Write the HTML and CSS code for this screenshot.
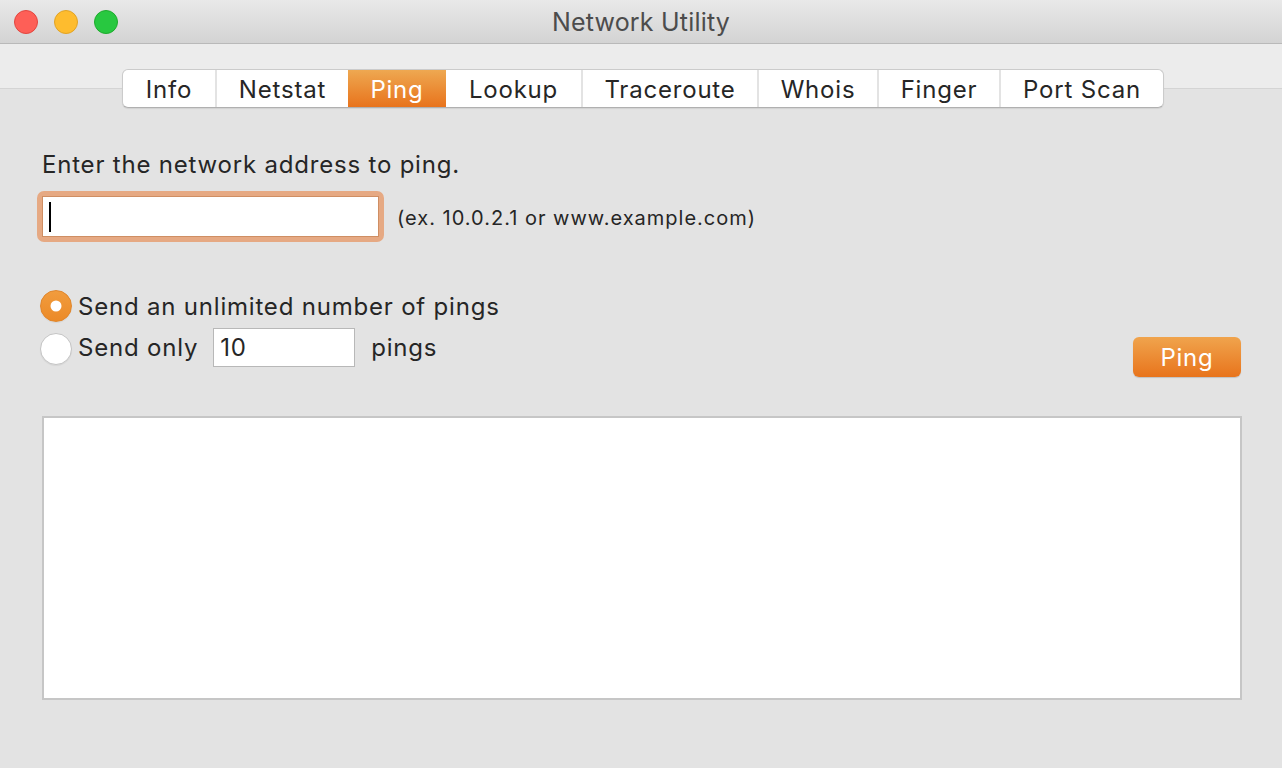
FILE: index.html
```html
<!DOCTYPE html>
<html>
<head>
<meta charset="utf-8">
<title>Network Utility</title>
<link rel="stylesheet" href="styles.css">
</head>
<body>
<div class="window">
  <div class="titlebar">
    <div class="lights">
      <span class="light red"></span>
      <span class="light yellow"></span>
      <span class="light green"></span>
    </div>
    <div class="title">Network Utility</div>
  </div>
  <div class="toolbar">
    <div class="segmented">
      <div class="seg s-info">Info</div>
      <div class="seg s-netstat">Netstat</div>
      <div class="seg s-ping selected">Ping</div>
      <div class="seg s-lookup">Lookup</div>
      <div class="seg s-trace">Traceroute</div>
      <div class="seg s-whois">Whois</div>
      <div class="seg s-finger">Finger</div>
      <div class="seg s-port">Port Scan</div>
    </div>
  </div>
  <div class="content">
    <div class="prompt">Enter the network address to ping.</div>
    <div class="addr-row">
      <div class="ring"><div class="addr-field"><span class="caret"></span></div></div>
      <div class="hint">(ex. 10.0.2.1 or www.example.com)</div>
    </div>
    <div class="options">
      <div class="radios">
        <div class="radio-row row1">
          <span class="radio checked"></span>
          <span class="label">Send an unlimited number of pings</span>
        </div>
        <div class="radio-row row2">
          <span class="radio"></span>
          <span class="label">Send only</span>
          <div class="count-field">10</div>
          <span class="label pings">pings</span>
        </div>
      </div>
      <div class="ping-btn">Ping</div>
    </div>
    <div class="output"></div>
  </div>
</div>
</body>
</html>
```
FILE: styles.css
```css
html, body {
  margin: 0;
  padding: 0;
}
body {
  width: 1282px;
  height: 768px;
  overflow: hidden;
  font-family: Inter, "Noto Sans", "Liberation Sans", sans-serif;
  color: #262626;
  background: #e3e3e3;
}
.window {
  width: 1282px;
  height: 768px;
  display: flex;
  flex-direction: column;
  background: #e3e3e3;
}
.titlebar {
  height: 43px;
  border-bottom: 1px solid #b9b9b9;
  background: linear-gradient(#e9e9e9, #d3d3d3);
  display: flex;
  align-items: center;
  position: relative;
  flex: none;
}
.lights {
  display: flex;
  gap: 16px;
  padding-left: 14px;
  padding-top: 1px;
}
.light {
  width: 24px;
  height: 24px;
  border-radius: 50%;
  box-sizing: border-box;
}
.red { background: #fe5f57; border: 1px solid #e2463f; }
.yellow { background: #febc2e; border: 1px solid #e1a325; }
.green { background: #28c840; border: 1px solid #1eab2d; }
.title {
  position: absolute;
  left: 0;
  right: 0;
  top: 1px;
  text-align: center;
  font-size: 25px;
  color: #4c4c4c;
  letter-spacing: 0.2px;
  line-height: 43px;
}
.toolbar {
  height: 44px;
  background: #ececec;
  border-bottom: 1px solid #d4d4d4;
  flex: none;
  padding-left: 122px;
}
.segmented {
  margin-top: 25px;
  display: flex;
  width: 1042px;
  height: 39px;
  box-sizing: border-box;
  background: #fff;
  border: 1px solid #cbcbcb;
  border-bottom-color: #b0b0b0;
  border-radius: 6px;
  box-shadow: 0 1px 1px rgba(0,0,0,0.08);
  overflow: hidden;
  position: relative;
  z-index: 1;
}
.seg {
  display: flex;
  align-items: center;
  justify-content: center;
  padding-top: 2px;
  font-size: 24px;
  letter-spacing: 0.8px;
  color: #262626;
  border-left: 2px solid #e3e3e3;
  box-sizing: border-box;
  flex: none;
}
.seg:first-child { border-left: none; }
.s-info { width: 92px; }
.s-netstat { width: 133px; }
.s-ping { width: 98px; }
.s-lookup { width: 135px; }
.s-trace { width: 176px; }
.s-whois { width: 120px; }
.s-finger { width: 122px; }
.s-port { width: 164px; }
.seg.selected {
  background: linear-gradient(#eea851, #e8731c);
  color: #fff;
  border-left: none;
}
.seg.selected + .seg { border-left: none; }
.content {
  flex: 1;
  padding: 0 40px 0 42px;
  display: flex;
  flex-direction: column;
}
.prompt {
  margin-top: 61px;
  font-size: 24px;
  letter-spacing: 0.8px;
  line-height: 30px;
  height: 30px;
}
.addr-row {
  margin-top: 11px;
  display: flex;
  align-items: center;
  margin-left: -5px;
}
.ring {
  width: 347px;
  height: 51px;
  box-sizing: border-box;
  padding: 5px;
  background: #e6a983;
  border-radius: 7px;
}
.addr-field {
  width: 100%;
  height: 100%;
  box-sizing: border-box;
  background: #fff;
  border: 1px solid #cf8e63;
  display: flex;
  align-items: center;
  padding-left: 6px;
}
.caret {
  width: 2px;
  height: 30px;
  background: #000;
}
.hint {
  margin-left: 13px;
  padding-top: 3px;
  font-size: 20px;
  letter-spacing: 1px;
  color: #262626;
}
.options {
  margin-top: 48px;
  display: flex;
  justify-content: space-between;
  align-items: flex-start;
}
.radios {
  display: flex;
  flex-direction: column;
  margin-left: -2px;
}
.radio-row {
  display: flex;
  align-items: center;
}
.row1 { height: 32px; }
.row2 { height: 40px; margin-top: 4px; }
.row2 .label { padding-top: 3px; }
.radio {
  width: 32px;
  height: 32px;
  border-radius: 50%;
  box-sizing: border-box;
  background: #fff;
  border: 1px solid #c4c4c4;
  box-shadow: 0 1px 1px rgba(0,0,0,0.06);
  flex: none;
  position: relative;
}
.row2 .radio { margin-top: 6px; }
.radio.checked {
  background: linear-gradient(#f19c3e, #ec8a27);
  border-color: #e0862c;
}
.radio.checked::after {
  content: "";
  position: absolute;
  width: 11px;
  height: 11px;
  border-radius: 50%;
  background: #fff;
  left: 50%;
  top: 50%;
  transform: translate(-50%, -50%);
}
.label {
  font-size: 24px;
  letter-spacing: 0.8px;
  margin-left: 6px;
}
.count-field {
  margin-left: 15px;
  margin-top: 2px;
  width: 142px;
  height: 39px;
  box-sizing: border-box;
  background: #fff;
  border: 1px solid #b8b8b8;
  font-size: 24px;
  letter-spacing: 0.8px;
  display: flex;
  align-items: center;
  padding-left: 6px;
}
.label.pings { margin-left: 16px; }
.ping-btn {
  margin-top: 47px;
  margin-right: 1px;
  width: 108px;
  height: 40px;
  border-radius: 6px;
  background: linear-gradient(#f0a44d, #e8741c);
  box-shadow: 0 1px 1px rgba(0,0,0,0.15);
  color: #fff;
  font-size: 24px;
  letter-spacing: 0.8px;
  display: flex;
  align-items: center;
  justify-content: center;
}
.output {
  margin-top: 39px;
  height: 284px;
  box-sizing: border-box;
  background: #fff;
  border: 2px solid #c6c6c6;
}
```
